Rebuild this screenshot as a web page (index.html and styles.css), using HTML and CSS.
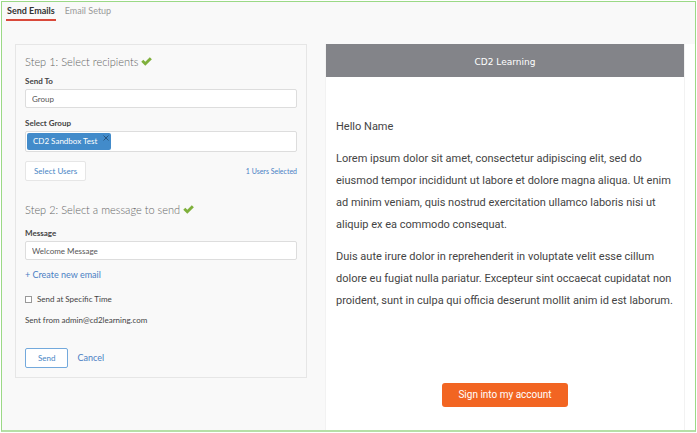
FILE: index.html
```html
<!DOCTYPE html>
<html lang="en">
<head>
<meta charset="UTF-8">
<meta name="viewport" content="width=device-width, initial-scale=1.0">
<title>Send Emails | CD2 Learning</title>
<link rel="stylesheet" href="styles.css">
</head>
<body>
    <div class="page">
        <nav class="tabs">
            <a href="#send" class="tab active">Send Emails</a>
            <a href="#setup" class="tab">Email Setup</a>
        </nav>

        <div class="columns">
            <form class="card">
                <h2>Step 1: Select recipients
                    <svg class="check" viewBox="0 0 20 16" aria-hidden="true"><path d="M.5 8.6 4.2 5 7.8 8.4 16 .4 19.8 4 7.8 15.8Z"/></svg>
                </h2>
                <div class="form-group">
                    <label for="send-to">Send To</label>
                    <select id="send-to" name="send-to" class="form-control">
                        <option>Group</option>
                    </select>
                </div>
                <div class="form-group">
                    <label for="group">Select Group</label>
                    <div class="tag-field">
                        <span class="tag">CD2 Sandbox Test
                            <button type="button" class="tag-remove" aria-label="Remove">
                                <svg viewBox="0 0 6 6"><path d="M.5.5 5.5 5.5M5.5.5.5 5.5"/></svg>
                            </button>
                        </span>
                        <input type="text" id="group" name="group">
                    </div>
                </div>
                <div class="users">
                    <button type="button" class="btn btn-light">Select Users</button>
                    <a href="#users" class="users-count">1 Users Selected</a>
                </div>

                <h2 class="step-two">Step 2: Select a message to send
                    <svg class="check" viewBox="0 0 20 16" aria-hidden="true"><path d="M.5 8.6 4.2 5 7.8 8.4 16 .4 19.8 4 7.8 15.8Z"/></svg>
                </h2>
                <div class="form-group">
                    <label for="message">Message</label>
                    <select id="message" name="message" class="form-control">
                        <option>Welcome Message</option>
                    </select>
                </div>
                <a href="#new" class="create">+ Create new email</a>
                <div class="schedule">
                    <input type="checkbox" id="specific-time" name="specific-time">
                    <label for="specific-time">Send at Specific Time</label>
                </div>
                <p class="sender">Sent from admin@cd2learning.com</p>
                <div class="actions">
                    <button type="submit" class="btn btn-primary">Send</button>
                    <a href="#cancel" class="cancel">Cancel</a>
                </div>
            </form>

            <div class="preview-column">
                <section class="preview">
                    <header class="preview-header">CD2 Learning</header>
                    <div class="preview-body">
                        <p>Hello Name</p>
                        <p>Lorem ipsum dolor sit amet, consectetur adipiscing elit, sed do eiusmod tempor incididunt ut labore et dolore magna aliqua. Ut enim ad minim veniam, quis nostrud exercitation ullamco laboris nisi ut aliquip ex ea commodo consequat.</p>
                        <p>Duis aute irure dolor in reprehenderit in voluptate velit esse cillum dolore eu fugiat nulla pariatur. Excepteur sint occaecat cupidatat non proident, sunt in culpa qui officia deserunt mollit anim id est laborum.</p>
                        <button type="button" class="sign-in">Sign into my account</button>
                    </div>
                </section>
            </div>
        </div>
    </div>
</body>
</html>
```
FILE: styles.css
```css
* {
    box-sizing: border-box;
}

body {
    margin: 0;
    padding: 1px;
    background-color: #fff;
    color: #444;
    font-family: Lato, sans-serif;
    font-size: 8px;
    line-height: 12px;
}

a {
    color: #4a80c4;
    text-decoration: none;
}

h2,
p {
    margin: 0;
}

.page {
    display: flex;
    flex-direction: column;
    min-height: calc(100vh - 2px);
    background-color: #f9f9f9;
    border: 1px solid #9bd986;
    border-bottom: 2px solid #b5dfa6;
}

/* Tabs */
.tabs {
    display: flex;
    gap: 8px;
    padding: 3px 4px 0;
}

.tab {
    padding: 0 1px 2px;
    border-bottom: 2px solid transparent;
    color: #999;
    font-size: 9px;
    line-height: 12px;
}

.tab.active {
    border-bottom-color: #d9493a;
    color: #333;
    font-weight: bold;
}

.columns {
    display: grid;
    grid-template-columns: 292fr 370fr;
    gap: 18px;
    flex: 1;
    padding: 23px 0 0 13px;
}

/* Form card */
.card {
    align-self: start;
    padding: 9px;
    border: 1px solid #e6e6e6;
}

h2 {
    margin-bottom: 5px;
    color: #666;
    font-size: 11px;
    font-weight: 300;
    line-height: 16px;
}

.step-two {
    margin: 21px 0 9px;
}

.check {
    width: 11px;
    height: 9px;
    fill: #7fb03c;
}

.form-group {
    margin-bottom: 9px;
}

.form-group label {
    display: block;
    margin-bottom: 2px;
    font-weight: bold;
}

.form-control {
    display: block;
    width: 100%;
    height: 19px;
    padding: 0 6px;
    appearance: none;
    background-color: #fff;
    border: 1px solid #ddd;
    border-radius: 2px;
    color: #555;
    font: inherit;
}

.tag-field {
    display: flex;
    height: 21px;
    padding: 1px;
    background-color: #fff;
    border: 1px solid #ddd;
    border-radius: 2px;
}

.tag-field input {
    flex: 1;
    min-width: 0;
    border: 0;
    background: none;
    font: inherit;
}

.tag {
    display: flex;
    gap: 4px;
    padding-left: 6px;
    background-color: #428bca;
    border-radius: 2px;
    color: #fff;
    line-height: 17px;
}

.tag-remove {
    align-self: flex-start;
    display: flex;
    padding: 2px;
    border: 0;
    background: none;
}

.tag-remove svg {
    width: 6px;
    height: 6px;
    fill: none;
    stroke: #265480;
}

.users {
    display: flex;
    justify-content: space-between;
    align-items: center;
}

.users-count {
    font-size: 7px;
}

.btn {
    height: 20px;
    background-color: #fff;
    border: 1px solid #e6e6e6;
    border-radius: 2px;
    color: #4a86c5;
    font: inherit;
}

.btn-light {
    padding: 0 8px;
}

.btn-primary {
    padding: 0 12px;
    border-color: #73a9dc;
}

.create {
    display: block;
    font-size: 9px;
}

.schedule {
    display: flex;
    align-items: center;
    gap: 5px;
    margin: 12px 0 9px;
}

.schedule input {
    width: 7px;
    height: 7px;
    margin: 0;
    appearance: none;
    background-color: #fff;
    border: 1px solid #999;
}

.schedule input:checked {
    background-color: #428bca;
}

.actions {
    display: flex;
    align-items: center;
    gap: 9px;
    margin-top: 22px;
}

.cancel {
    font-size: 9px;
}

/* Email preview */
.preview-column {
    padding-right: 10px;
    background-color: #fff;
}

.preview {
    height: 100%;
    border: 1px solid #f2f2f2;
    border-width: 0 1px;
}

.preview-header {
    padding: 12px 10px 9px;
    background-color: #838489;
    color: #fff;
    font-family: "DejaVu Sans", sans-serif;
    font-size: 9px;
    line-height: 12px;
    text-align: center;
}

.preview-body {
    padding: 39px 10px 0;
    font-family: Roboto, sans-serif;
    font-size: 11px;
    line-height: 22px;
}

.preview-body p {
    margin-bottom: 10px;
}

.sign-in {
    display: block;
    margin: 71px auto 0;
    padding: 0 16px;
    background-color: #f26522;
    border: 0;
    border-radius: 3px;
    color: #fff;
    font: inherit;
    font-size: 10px;
    line-height: 24px;
}
```
